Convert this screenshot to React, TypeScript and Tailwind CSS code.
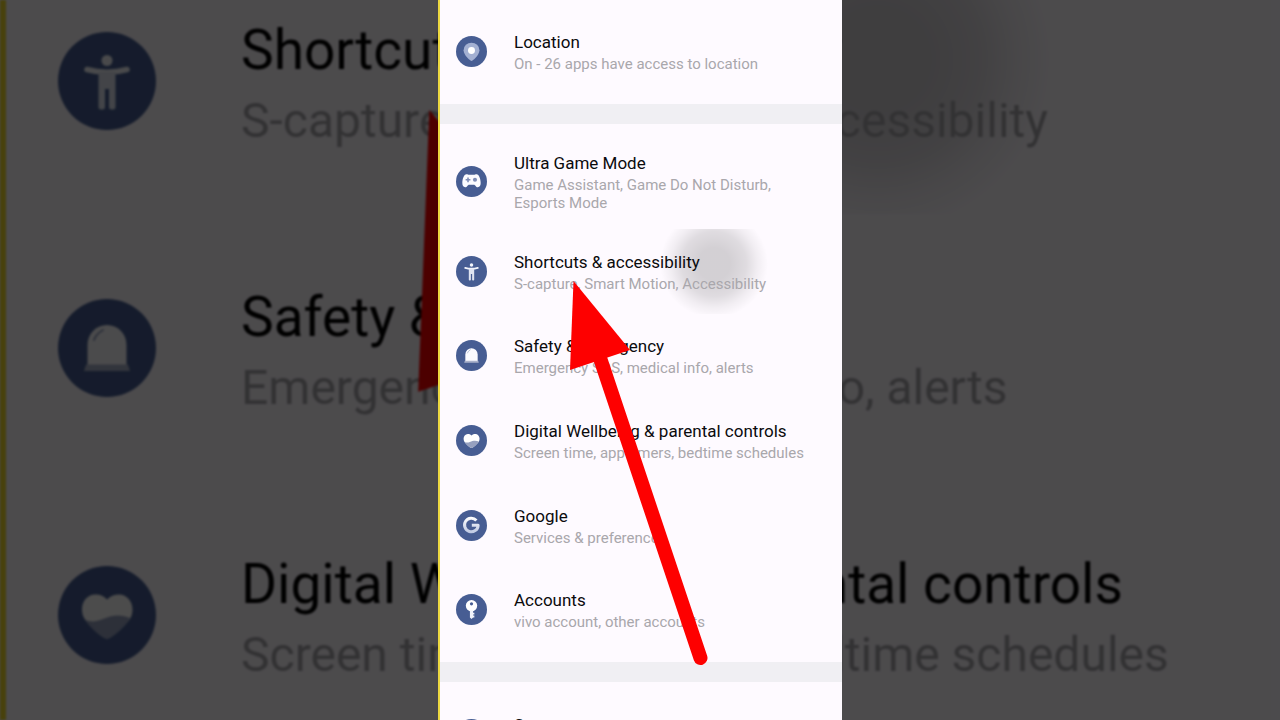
import type { ReactNode } from 'react'
import clsx from 'clsx'

type IconName = 'location' | 'game' | 'access' | 'safety' | 'wellbeing' | 'google' | 'key' | 'system'

type Item = {
  icon: IconName
  title: string
  note: string
  pressed?: boolean
}

const LOCATION: Item[] = [
  { icon: 'location', title: 'Location', note: 'On - 26 apps have access to location' },
]

const FEATURES: Item[] = [
  { icon: 'game', title: 'Ultra Game Mode', note: 'Game Assistant, Game Do Not Disturb, Esports Mode' },
  { icon: 'access', title: 'Shortcuts & accessibility', note: 'S-capture, Smart Motion, Accessibility', pressed: true },
  { icon: 'safety', title: 'Safety & emergency', note: 'Emergency SOS, medical info, alerts' },
  { icon: 'wellbeing', title: 'Digital Wellbeing & parental controls', note: 'Screen time, app timers, bedtime schedules' },
  { icon: 'google', title: 'Google', note: 'Services & preferences' },
  { icon: 'key', title: 'Accounts', note: 'vivo account, other accounts' },
]

const SYSTEM: Item[] = [{ icon: 'system', title: 'System', note: '' }]

// Glyphs share a 98-unit box with the blue disc behind them
const GLYPHS: Record<IconName, ReactNode> = {
  location: (
    <>
      <path d="M49 79C46 79 24 61 24 45a25 24 0 0 1 50 0C74 61 52 79 49 79Z" fill="#a3b0d2" />
      <circle cx="49" cy="46" r="11" fill="#fff" />
    </>
  ),
  game: (
    <>
      <path
        d="M33 26c4 0 5 2 9 2h14c4 0 5-2 9-2 8 0 13 15 13 28 0 8-3 13-9 13-7 0-7-8-13-8H42c-6 0-6 8-13 8-6 0-9-5-9-13 0-13 5-28 13-28Z"
        fill="#fbfbff"
      />
      <path d="M38 36v15M30.500 43.500h15" stroke="#7f8db6" strokeWidth="5" />
      <circle cx="60" cy="43.500" r="6.500" fill="#7f8db6" />
    </>
  ),
  access: (
    <>
      <circle cx="49" cy="28.500" r="5.500" fill="#f4f6fc" />
      <path d="M29 37.500Q49 43 69 37.500" stroke="#f4f6fc" strokeWidth="5.500" strokeLinecap="round" fill="none" />
      <path d="M40.500 40H57.500V75q0 2.500-2.500 2.500h-1.500q-2.500 0-2.500-2.500V57h-4V75q0 2.500-2.500 2.500H43q-2.500 0-2.500-2.500Z" fill="#dfe4f1" />
    </>
  ),
  safety: (
    <>
      <path d="M29.500 66V46a19.500 20 0 0 1 39 0V66Z" fill="#fbfbff" />
      <path d="M36 41q2-6 9-10" stroke="#97a2c2" strokeWidth="2" strokeLinecap="round" fill="none" />
      <path d="M28 65.500h42l2 6.500H26Z" fill="#a9b1ca" />
    </>
  ),
  wellbeing: (
    <>
      <path
        d="M49 33.500c4-4 8-5 12-5 8 0 13.500 7 13.500 15 0 4-1 7-3 10C66 61 56 70 51 72q-2 1-4 0C42 70 32 61 27 53.500c-2-3-3-6-3-10 0-8 5-15 13.500-15 4 0 8 1 11.500 5Z"
        fill="#fff"
      />
      <path d="M27 53.500c10 5 17-1 25-3 8-2 14-1 20 1.500C67 61 56 70 51 72q-2 1-4 0C42 70 32 61 27 53.500Z" fill="#96a0bf" />
    </>
  ),
  google: (
    <path
      d="M64.500 33A21.500 21.500 0 1 0 70 48.500H50"
      stroke="url(#g-fade)"
      strokeWidth="9.500"
      strokeLinejoin="round"
      fill="none"
    />
  ),
  key: (
    <>
      <circle cx="49" cy="37" r="18" fill="#fff" />
      <circle cx="49" cy="31" r="5" fill="#475d93" />
      <path d="M44 52h10v7h4v6h-4v3h4v6h-4l-5 5-5-5Z" fill="#f1f3fa" />
    </>
  ),
  system: null,
}

function RowIcon({ name, large }: { name: IconName; large?: boolean }) {
  return (
    <svg viewBox="0 0 98 98" className={clsx('shrink-0', large ? 'size-[98px]' : 'size-[31px]')} aria-hidden>
      <defs>
        <linearGradient id="g-fade" gradientUnits="userSpaceOnUse" x1="49" y1="22" x2="49" y2="76">
          <stop offset="0" stopColor="#fff" />
          <stop offset="1" stopColor="#b9c4e0" />
        </linearGradient>
      </defs>
      <circle cx="49" cy="49" r="49" fill="#475d93" />
      {GLYPHS[name]}
    </svg>
  )
}

// Soft grey mark left by the finger on the pressed row
function TouchMark({ large }: { large?: boolean }) {
  return (
    <span
      aria-hidden
      className={clsx(
        'absolute rounded-full bg-[radial-gradient(closest-side,rgb(0_0_0/0.17)_30%,rgb(0_0_0/0.12)_60%,rgb(0_0_0/0.05)_80%,transparent)]',
        large ? '-top-[60px] left-[700px] size-[344px]' : '-top-[19px] left-[220px] size-[108px]',
      )}
    />
  )
}

function Row({ item }: { item: Item }) {
  return (
    <li className="flex grow basis-21">
      <a href="#" className="relative flex grow items-center gap-[27px] overflow-hidden py-[17px] pr-8 pl-4">
        {item.pressed && <TouchMark />}
        <RowIcon name={item.icon} />
        <span className="relative flex flex-col gap-px">
          <span className="text-[17px] leading-6 text-[#0b0b0d]">{item.title}</span>
          <span className="min-h-[18px] text-[15px] leading-[18px] text-[#a9a7ac]">{item.note}</span>
        </span>
      </a>
    </li>
  )
}

function BackdropRow({ item }: { item: Item }) {
  return (
    <div className="relative flex h-[267px] shrink-0 items-center gap-[85px] overflow-hidden pl-[52px] whitespace-nowrap">
      {item.pressed && <TouchMark large />}
      <RowIcon name={item.icon} large />
      <div className="relative flex flex-col gap-1">
        <p className="text-[55px] leading-[76px] text-black">{item.title}</p>
        <p className="text-[48px] leading-[58px] text-[#a9a7ac]">{item.note}</p>
      </div>
    </div>
  )
}

function Arrow() {
  return (
    <svg
      viewBox="0 0 404 720"
      preserveAspectRatio="xMidYMid slice"
      className="pointer-events-none absolute inset-0 size-full"
      aria-hidden
    >
      <path d="M160 352 262.500 658" stroke="#fe0000" strokeWidth="14" strokeLinecap="round" />
      <path d="M135.500 281 192 350 132 370Z" fill="#fe0000" />
    </svg>
  )
}

export default function App() {
  return (
    <div className="relative h-screen overflow-hidden bg-[#4b4b4b] font-['Roboto',sans-serif]">
      {/* Enlarged, dimmed copy behind the phone */}
      <div className="absolute inset-0 overflow-hidden bg-[#fefaff]" aria-hidden>
        <div className="relative flex h-full blur-[1px]">
          <div className="w-1.5 shrink-0 bg-[#f0da2a]" />
          <div className="-mt-[53px] flex grow flex-col">
            {FEATURES.slice(1, 4).map((item) => (
              <BackdropRow key={item.title} item={item} />
            ))}
          </div>
          <Arrow />
        </div>
        <div className="absolute inset-0 bg-black/70" />
      </div>

      <main className="relative mx-auto flex h-full w-full max-w-[404px] overflow-hidden bg-[#fefaff]">
        <div className="w-0.5 shrink-0 bg-[#ecd840]" />
        <div className="flex grow flex-col">
          <ul className="flex shrink-0 flex-col pt-[9px] pb-[11px]">
            {LOCATION.map((item) => (
              <Row key={item.title} item={item} />
            ))}
          </ul>
          <div className="h-5 shrink-0 bg-[#f0eff3]" />
          <ul className="flex min-h-[538px] shrink-0 flex-col py-2.5">
            {FEATURES.map((item) => (
              <Row key={item.title} item={item} />
            ))}
          </ul>
          <div className="h-5 shrink-0 bg-[#f0eff3]" />
          <ul className="flex shrink-0 flex-col py-2.5">
            {SYSTEM.map((item) => (
              <Row key={item.title} item={item} />
            ))}
          </ul>
        </div>
        <Arrow />
      </main>
    </div>
  )
}
